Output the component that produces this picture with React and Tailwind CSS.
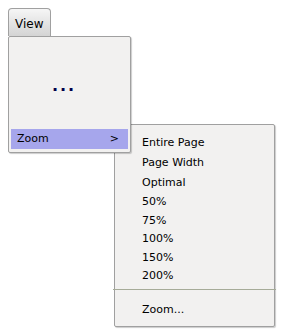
import React from 'react';

const zoomItems = [
  { label: 'Entire Page', h: 'h-[19px]' },
  { label: 'Page Width', h: 'h-[20px]' },
  { label: 'Optimal', h: 'h-[20px]' },
  { label: '50%', h: 'h-[19px]' },
  { label: '75%', h: 'h-[18px]' },
  { label: '100%', h: 'h-[19px]' },
  { label: '150%', h: 'h-[18px]' },
  { label: '200%', h: 'h-[19px]' },
];

const App = () => {
  return (
    <div className="w-[288px] h-[336px] bg-white pt-2 pl-2 text-black font-['DejaVu_Sans',sans-serif]">
      {/* Menu bar tab */}
      <div className="w-[43px] h-[28px] border border-b-0 border-[#a0a0a0] rounded-t-[4px] bg-gradient-to-b from-[#f6f6f6] to-[#d4d4d4] text-[12px] leading-[16px] pl-[6px] pt-[7px]">
        View
      </div>

      <div className="relative w-[123px]">
        {/* View menu */}
        <div className="relative z-10 h-[117px] flex flex-col border border-[#a0a0a0] rounded-[2px] bg-[#f2f1f0] shadow-[1px_1px_1px_rgba(0,0,0,0.2)] px-[2px] pt-[2px] pb-[3px]">
          <div className="flex-1 pt-[39px] pl-[41px] text-[16px] leading-[16px] font-bold tracking-[1.9px] text-[#00004a]">
            ...
          </div>
          <div className="h-[20px] flex items-center justify-between bg-[#a6a6ec] pl-[6px] pr-[9px] text-[11px]">
            <span>Zoom</span>
            <span>&gt;</span>
          </div>
        </div>

        {/* Zoom submenu */}
        <div className="absolute left-[106px] top-[88px] w-[161px] border border-[#a0a0a0] rounded-[2px] bg-[#f2f1f0] shadow-[1px_1px_1px_rgba(0,0,0,0.2)] pt-[9px] pb-[6px] text-[11px]">
          {zoomItems.map((item) => (
            <div key={item.label} className={`${item.h} flex items-center pl-[27px]`}>
              {item.label}
            </div>
          ))}
          <div className="h-px -mx-[2px] mt-[3px] mb-[11px] bg-[#a6ab98]" />
          <div className="h-[19px] flex items-center pl-[27px]">Zoom...</div>
        </div>
      </div>
    </div>
  );
};

export default App;
